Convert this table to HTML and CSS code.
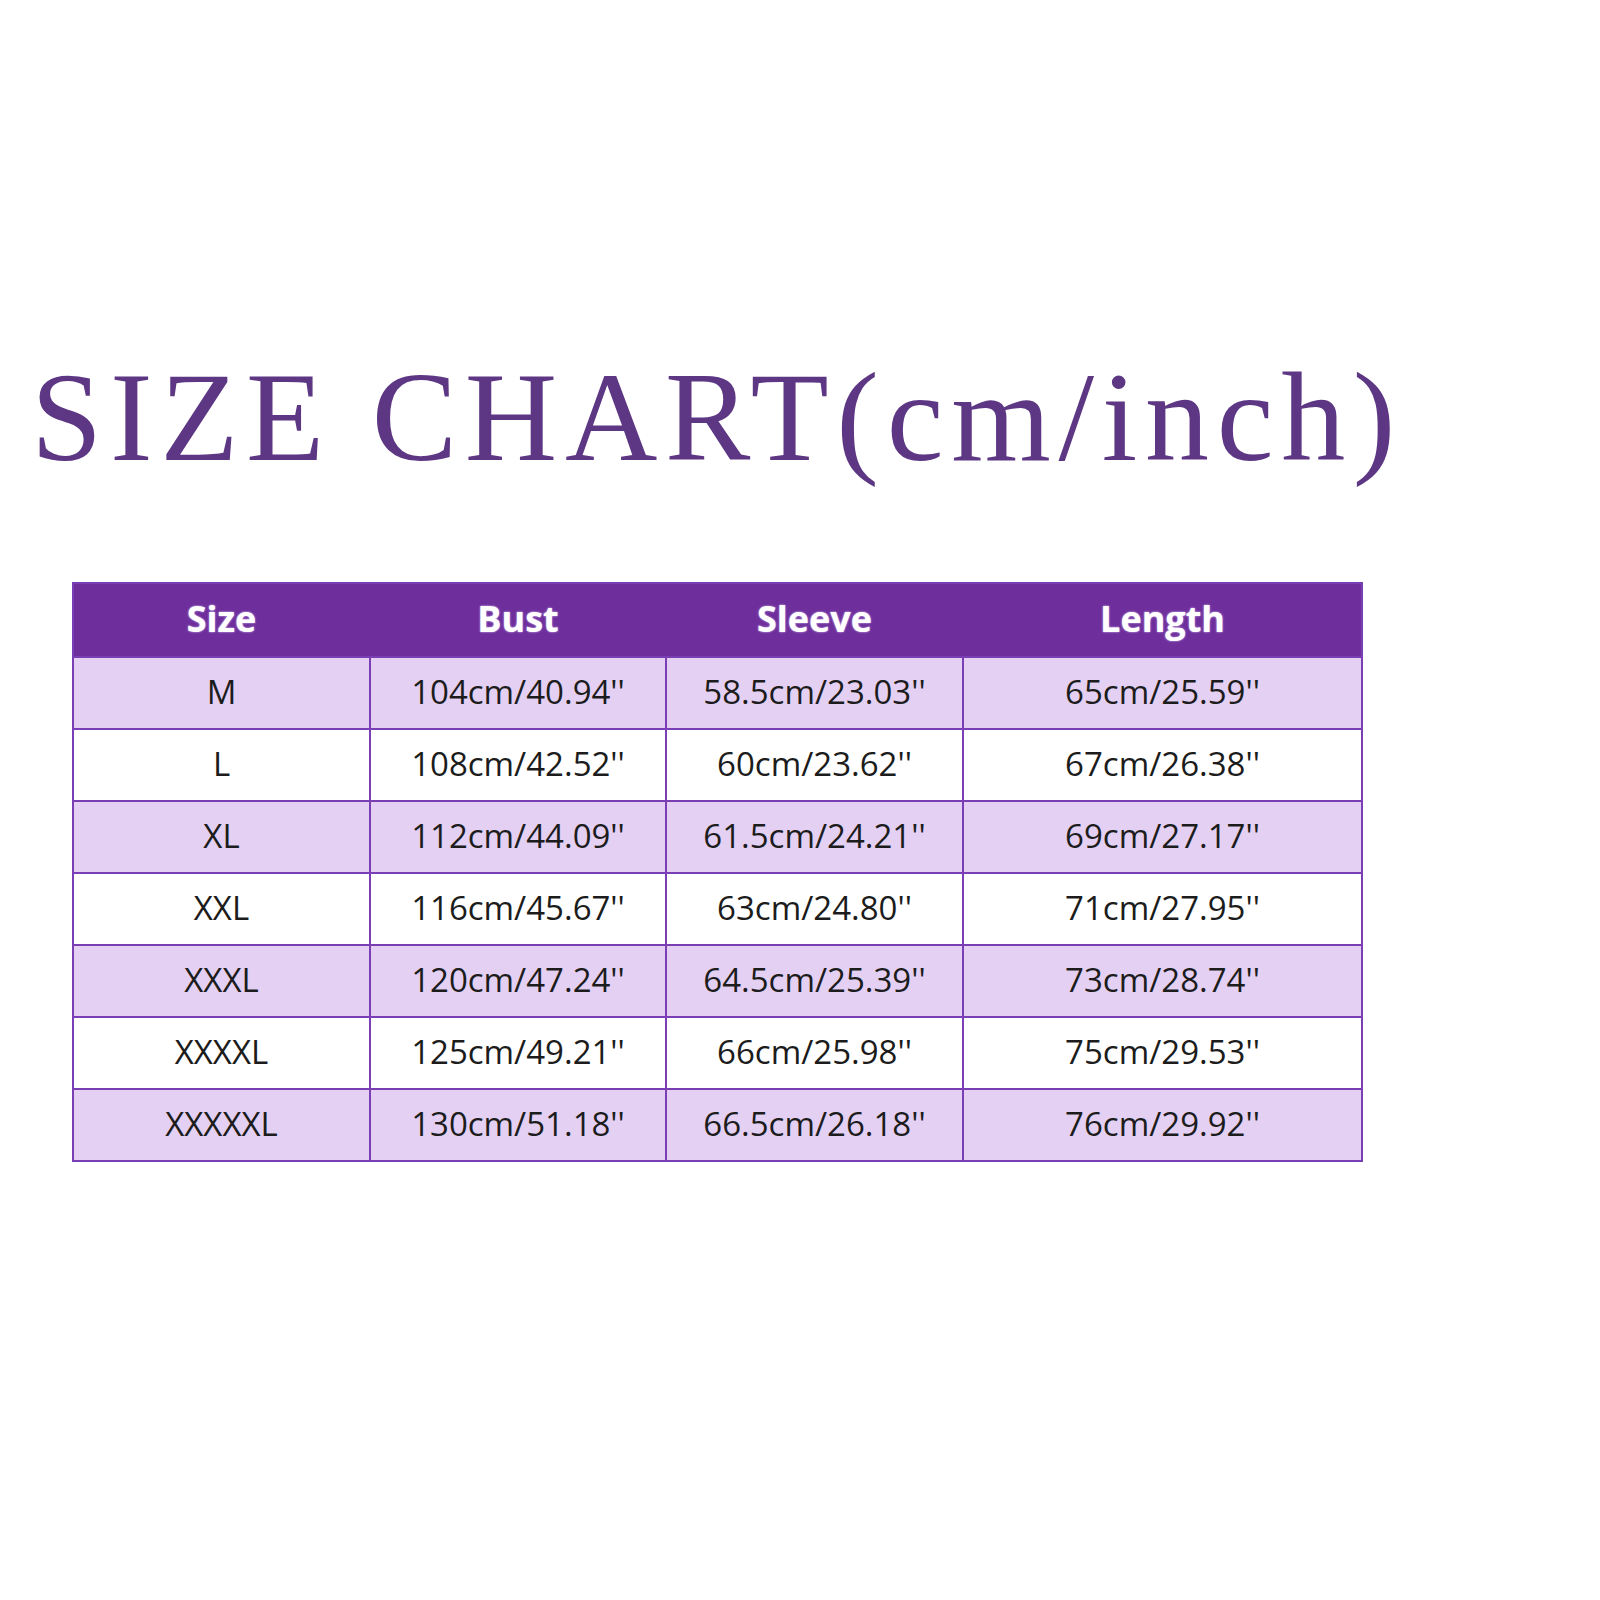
FILE: index.html
```html
<!DOCTYPE html>
<html>
<head>
<meta charset="utf-8">
<link rel="stylesheet" href="styles.css">
</head>
<body>
<div class="page">
  <h1 class="title">SIZE CHART(cm/inch)</h1>
  <div class="chart">
    <div class="head">
      <div>Size</div><div>Bust</div><div>Sleeve</div><div>Length</div>
    </div>
    <div class="row alt"><div>M</div><div>104cm/40.94''</div><div>58.5cm/23.03''</div><div>65cm/25.59''</div></div>
    <div class="row"><div>L</div><div>108cm/42.52''</div><div>60cm/23.62''</div><div>67cm/26.38''</div></div>
    <div class="row alt"><div>XL</div><div>112cm/44.09''</div><div>61.5cm/24.21''</div><div>69cm/27.17''</div></div>
    <div class="row"><div>XXL</div><div>116cm/45.67''</div><div>63cm/24.80''</div><div>71cm/27.95''</div></div>
    <div class="row alt"><div>XXXL</div><div>120cm/47.24''</div><div>64.5cm/25.39''</div><div>73cm/28.74''</div></div>
    <div class="row"><div>XXXXL</div><div>125cm/49.21''</div><div>66cm/25.98''</div><div>75cm/29.53''</div></div>
    <div class="row alt"><div>XXXXXL</div><div>130cm/51.18''</div><div>66.5cm/26.18''</div><div>76cm/29.92''</div></div>
  </div>
</div>
</body>
</html>
```
FILE: styles.css
```css
html, body {
  margin: 0;
  padding: 0;
  background: #ffffff;
}
.page {
  width: 1600px;
  height: 1600px;
  padding-top: 353px;
  box-sizing: border-box;
}
.title {
  margin: 0 0 101px 0;
  padding-left: 31px;
  font-family: "Liberation Serif", "Times New Roman", serif;
  font-weight: normal;
  font-size: 128px;
  line-height: 128px;
  letter-spacing: 7.7px;
  color: #5d3784;
  white-space: nowrap;
}
.chart {
  margin-left: 72px;
  width: 1291px;
  border: 2px solid #7a3fb4;
  box-sizing: border-box;
  font-family: "Open Sans", "Noto Sans", sans-serif;
}
.head, .row {
  display: grid;
  grid-template-columns: 295px 294px 295px 397px;
  column-gap: 2px;
}
.head {
  height: 72px;
  background: #6e2f9d;
}
.head > div {
  display: flex;
  align-items: center;
  justify-content: center;
  padding-bottom: 4px;
  color: #ffffff;
  font-weight: bold;
  font-size: 36px;
  text-shadow: 0 0 2px #e9dcff;
}
.row {
  height: 72px;
  box-sizing: border-box;
  border-top: 2px solid #7a3fb4;
  background: #7a3fb4;
}
.row > div {
  display: flex;
  align-items: center;
  justify-content: center;
  padding-bottom: 4px;
  background: #ffffff;
  color: #1c1c1c;
  font-size: 33px;
}
.row.alt > div {
  background: #e4d0f3;
}
```
